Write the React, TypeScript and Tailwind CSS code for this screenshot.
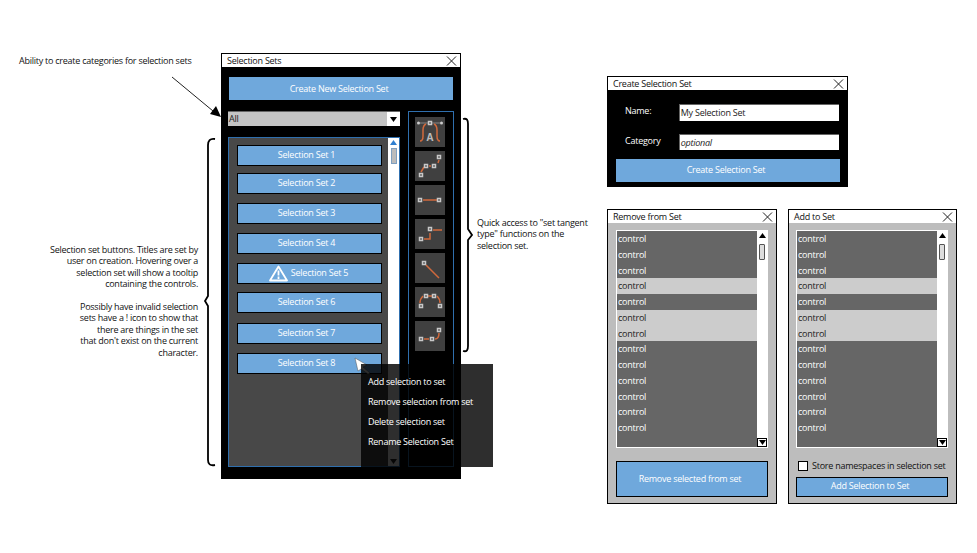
import { ReactNode } from "react";

const font = "font-['Open_Sans','Noto_Sans',sans-serif] text-[9px] tracking-[-0.25px]";

const sets = [
  { name: "Selection Set 1", gap: "mt-[7px]" },
  { name: "Selection Set 2", gap: "mt-[7px]" },
  { name: "Selection Set 3", gap: "mt-[9px]" },
  { name: "Selection Set 4", gap: "mt-[9px]" },
  { name: "Selection Set 5", gap: "mt-[9px]", warn: true },
  { name: "Selection Set 6", gap: "mt-[8px]" },
  { name: "Selection Set 7", gap: "mt-[10px]" },
  { name: "Selection Set 8", gap: "mt-[9px]" },
];

const selectedRows = [3, 5, 6];

function Close() {
  return (
    <svg width="11" height="10" viewBox="0 0 11 10" className="text-[#222]">
      <path d="M1 .5 10 9.5M10 .5 1 9.5" stroke="currentColor" strokeWidth="1" fill="none" />
    </svg>
  );
}

function TitleBar({ title }: { title: string }) {
  return (
    <div className="flex h-[13px] items-center justify-between bg-white pl-[5px] pr-[3px] text-[#111]">
      <span>{title}</span>
      <Close />
    </div>
  );
}

function Node({ x, y }: { x: number; y: number }) {
  return <rect x={x - 1.5} y={y - 1.5} width="3" height="3" fill="#4a4a4a" stroke="#c8c8c8" strokeWidth="1.5" />;
}

function IconTile({ children }: { children: ReactNode }) {
  return (
    <svg width="30" height="30" viewBox="0 0 30 30" className="block bg-[#404040]">
      {children}
    </svg>
  );
}

const orange = { stroke: "#d0693c", strokeWidth: 1.5, fill: "none" };

const tangentIcons = [
  <>
    <path d="M5 6H25" stroke="#999" strokeWidth=".8" />
    <circle cx="3.5" cy="6" r="1.5" fill="#ccc" />
    <circle cx="26.5" cy="6" r="1.5" fill="#ccc" />
    <Node x={15} y={6} />
    <path d="M5 24C7 24 8 22 8 19V13C8 10 9 8 11 7M25 24C23 24 22 22 22 19V13C22 10 21 8 19 7" {...orange} />
    <text x="15" y="24" textAnchor="middle" fontSize="10" fontWeight="700" fontFamily="'Open Sans',sans-serif" letterSpacing="0" fill="#bbb">A</text>
  </>,
  <>
    <path d="M6 21 9 16M23 12 24 9" {...orange} />
    <path d="M14 15H16" {...orange} />
    <Node x={6} y={24} />
    <Node x={11} y={15} />
    <Node x={19} y={15} />
    <Node x={24} y={6} />
  </>,
  <>
    <path d="M8 15H22" {...orange} />
    <Node x={5} y={15} />
    <Node x={24} y={15} />
  </>,
  <>
    <path d="M9 20H15V14M18 11H27" {...orange} />
    <Node x={6} y={20} />
    <Node x={15} y={10} />
  </>,
  <>
    <path d="M11 12 24 25" {...orange} />
    <Node x={9} y={10} />
  </>,
  <>
    <path d="M5 16C5 13 6 11 8 9M13 9H17M22 9C24 11 25 13 25 16" {...orange} />
    <Node x={6} y={19} />
    <Node x={11} y={9} />
    <Node x={19} y={9} />
    <Node x={25} y={19} />
  </>,
  <>
    <path d="M9 18H14M20 18C23 18 24 16 24 12" {...orange} />
    <Node x={6} y={18} />
    <Node x={17} y={18} />
    <Node x={24} y={9} />
  </>,
];

function Warning() {
  return (
    <svg width="19" height="17" viewBox="0 0 19 17" className="absolute left-[31px] top-[1px]">
      <path d="M9.5 1.5 18 15.5H1Z" fill="none" stroke="#fff" strokeWidth="1.8" strokeLinejoin="round" />
      <path d="M9.5 5.5V10.5M9.5 11.5V14" stroke="#fff" strokeWidth="1.8" />
    </svg>
  );
}

function ArrowUp({ fill }: { fill: string }) {
  return (
    <svg width="7" height="5" viewBox="0 0 7 5" className="block">
      <path d="M3.5 0 7 5H0Z" fill={fill} />
    </svg>
  );
}

function ArrowDown({ fill }: { fill: string }) {
  return (
    <svg width="7" height="5" viewBox="0 0 7 5" className="block">
      <path d="M0 0H7L3.5 5Z" fill={fill} />
    </svg>
  );
}

function MainWindow() {
  return (
    <div className={`absolute left-[221px] top-[53px] h-[426px] w-[240px] border border-black bg-black ${font}`}>
      <TitleBar title="Selection Sets" />
      <div className="px-[6px] pt-[10px]">
        <div className="ml-px flex h-[23px] w-[224px] items-center justify-center bg-[#6fa8dc] pr-[4px] text-white">
          Create New Selection Set
        </div>
        <div className="mt-[11px] flex gap-[8px]">
          <div className="w-[173px]">
            <div className="flex h-[15px] border-t border-[#666] bg-[#c4c4c4] text-[#222]">
              <span className="flex-1 pl-px leading-[13px]">All</span>
              <span className="flex w-[13px] items-center justify-center bg-white">
                <ArrowDown fill="#000" />
              </span>
            </div>
            <div className="mt-[11px] flex h-[330px] border border-[#2f6fae] bg-[#484848]">
              <div className="flex-1 pl-[8px]">
                {sets.map((s) => (
                  <div
                    key={s.name}
                    className={`relative flex h-[21px] w-[145px] items-center justify-center border border-black bg-[#6fa8dc] pb-[2px] pr-[6px] text-white ${s.gap}`}
                  >
                    {s.warn && <Warning />}
                    <span className={s.warn ? "pl-[26px]" : ""}>{s.name}</span>
                  </div>
                ))}
              </div>
              <div className="flex w-[11px] flex-col items-center bg-white">
                <div className="pt-[2px]">
                  <ArrowUp fill="#2f7fd0" />
                </div>
                <div className="mt-[3px] h-[16px] w-[6px] border border-[#7f9fc0] bg-[#bbb]" />
                <div className="mt-auto pb-[2px]">
                  <ArrowDown fill="#222" />
                </div>
              </div>
            </div>
          </div>
          <div className="flex h-[356px] w-[46px] flex-col gap-[4px] border border-[#2f6fae] pl-[6px] pt-[5px]">
            {tangentIcons.map((icon, i) => (
              <IconTile key={i}>{icon}</IconTile>
            ))}
          </div>
        </div>
      </div>
    </div>
  );
}

function Tooltip() {
  return (
    <div className={`absolute left-[361px] top-[364px] flex h-[103px] w-[132px] flex-col gap-[5px] bg-black/[0.82] pl-[7px] pt-[10px] text-white ${font}`}>
      <div className="h-[15px] leading-[15px]">Add selection to set</div>
      <div className="h-[15px] leading-[15px]">Remove selection from set</div>
      <div className="h-[15px] leading-[15px]">Delete selection set</div>
      <div className="h-[15px] leading-[15px]">Rename Selection Set</div>
    </div>
  );
}

function CreateWindow() {
  return (
    <div className={`absolute left-[607px] top-[76px] h-[111px] w-[241px] border border-black bg-black ${font}`}>
      <TitleBar title="Create Selection Set" />
      <div className="px-[8px] pt-[14px]">
        <div className="flex h-[17px] items-center pl-[9px] text-white">
          <span className="-mt-[3px] w-[54px]">Name:</span>
          <span className="h-[17px] w-[161px] border-t border-l border-[#666] bg-white pl-px leading-[15px] text-[#222]">
            My Selection Set
          </span>
        </div>
        <div className="mt-[13px] flex h-[16px] items-center pl-[9px] text-white">
          <span className="-mt-[3px] w-[54px]">Category</span>
          <span className="h-[16px] w-[161px] border-t border-l border-[#666] bg-white pl-px italic leading-[15px] text-[#222]">
            optional
          </span>
        </div>
        <div className="mt-[9px] flex h-[23px] w-[224px] items-center justify-center bg-[#6fa8dc] pb-[2px] pr-[4px] text-white">
          Create Selection Set
        </div>
      </div>
    </div>
  );
}

function ControlList() {
  return (
    <div className="flex h-[218px] w-[152px] border border-white bg-[#666]">
      <div className="flex-1">
        {Array.from({ length: 13 }).map((_, i) => (
          <div
            key={i}
            className={
              selectedRows.includes(i)
                ? "h-[15.75px] bg-[#ccc] pl-px leading-[15.75px] text-[#222]"
                : "h-[15.75px] pl-px leading-[15.75px] text-white"
            }
          >
            control
          </div>
        ))}
      </div>
      <div className="flex w-[10px] flex-col items-center bg-white">
        <div className="pt-[2px]">
          <ArrowUp fill="#000" />
        </div>
        <div className="mt-[6px] h-[16px] w-[6px] rounded-[1px] border border-[#555] bg-[#ddd]" />
        <div className="mt-auto flex h-[9px] w-full items-center justify-center border border-black">
          <ArrowDown fill="#000" />
        </div>
      </div>
    </div>
  );
}

function RemoveWindow() {
  return (
    <div className={`absolute left-[607px] top-[209px] h-[295px] w-[170px] border border-black bg-[#bdbdbd] ${font}`}>
      <TitleBar title="Remove from Set" />
      <div className="px-[8px] pt-[7px]">
        <ControlList />
        <div className="mt-[13px] flex h-[36px] w-[152px] items-center justify-center border border-black bg-[#6fa8dc] pr-[4px] text-white">
          Remove selected from set
        </div>
      </div>
    </div>
  );
}

function AddWindow() {
  return (
    <div className={`absolute left-[788px] top-[209px] h-[295px] w-[169px] border border-black bg-[#bdbdbd] ${font}`}>
      <TitleBar title="Add to Set" />
      <div className="px-[7px] pt-[7px]">
        <ControlList />
        <div className="mt-[13px] flex h-[10px] items-center gap-[4px] whitespace-nowrap pl-[2px] text-[#111]">
          <span className="h-[10px] w-[10px] shrink-0 border border-black bg-white" />
          Store namespaces in selection set
        </div>
        <div className="mt-[6px] flex h-[20px] w-[152px] items-center justify-center border border-black bg-[#6fa8dc] pb-[2px] pr-[4px] text-white">
          Add Selection to Set
        </div>
      </div>
    </div>
  );
}

function Sketches() {
  return (
    <svg width="977" height="553" viewBox="0 0 977 553" className="absolute left-0 top-0">
      {/* arrow to the category dropdown */}
      <path d="M172 77 213 111" stroke="#222" strokeWidth="1" fill="none" />
      <path d="M221 117 210 114 216 106Z" fill="#000" />
      {/* brace left of the list */}
      <path d="M215 139C210 138 208 141 208 145V296L205 301L208 306V460C208 464 210 466 215 465" stroke="#000" strokeWidth="1.8" fill="none" />
      {/* brace right of the tangent panel */}
      <path d="M463 119C467 118 468 120 468 124V229L472 235L468 240V346C468 350 467 352 463 351" stroke="#000" strokeWidth="1.8" fill="none" />
      {/* cursor */}
      <path d="M355 358 367 365 363 367 370 373 368 374 361 369 358 371Z" fill="#fff" stroke="#555" strokeWidth=".5" />
    </svg>
  );
}

export default function App() {
  return (
    <div className={`relative h-[553px] w-[977px] overflow-hidden bg-white text-[#111] ${font}`}>
      <MainWindow />
      <Sketches />
      <Tooltip />
      <CreateWindow />
      <RemoveWindow />
      <AddWindow />
      <p className="absolute left-[19px] top-[54px]">Ability to create categories for selection sets</p>
      <p className="absolute left-[30px] top-[244px] w-[168px] text-right leading-[11.4px]">
        Selection set buttons. Titles are set by
        <br />
        user on creation. Hovering over a
        <br />
        selection set will show a tooltip
        <br />
        containing the controls.
        <br />
        <br />
        Possibly have invalid selection
        <br />
        sets have a ! icon to show that
        <br />
        there are things in the set
        <br />
        that don't exist on the current
        <br />
        character.
      </p>
      <p className="absolute left-[477px] top-[217px] whitespace-nowrap leading-[11.4px]">
        Quick access to "set tangent
        <br />
        type" functions on the
        <br />
        selection set.
      </p>
    </div>
  );
}
